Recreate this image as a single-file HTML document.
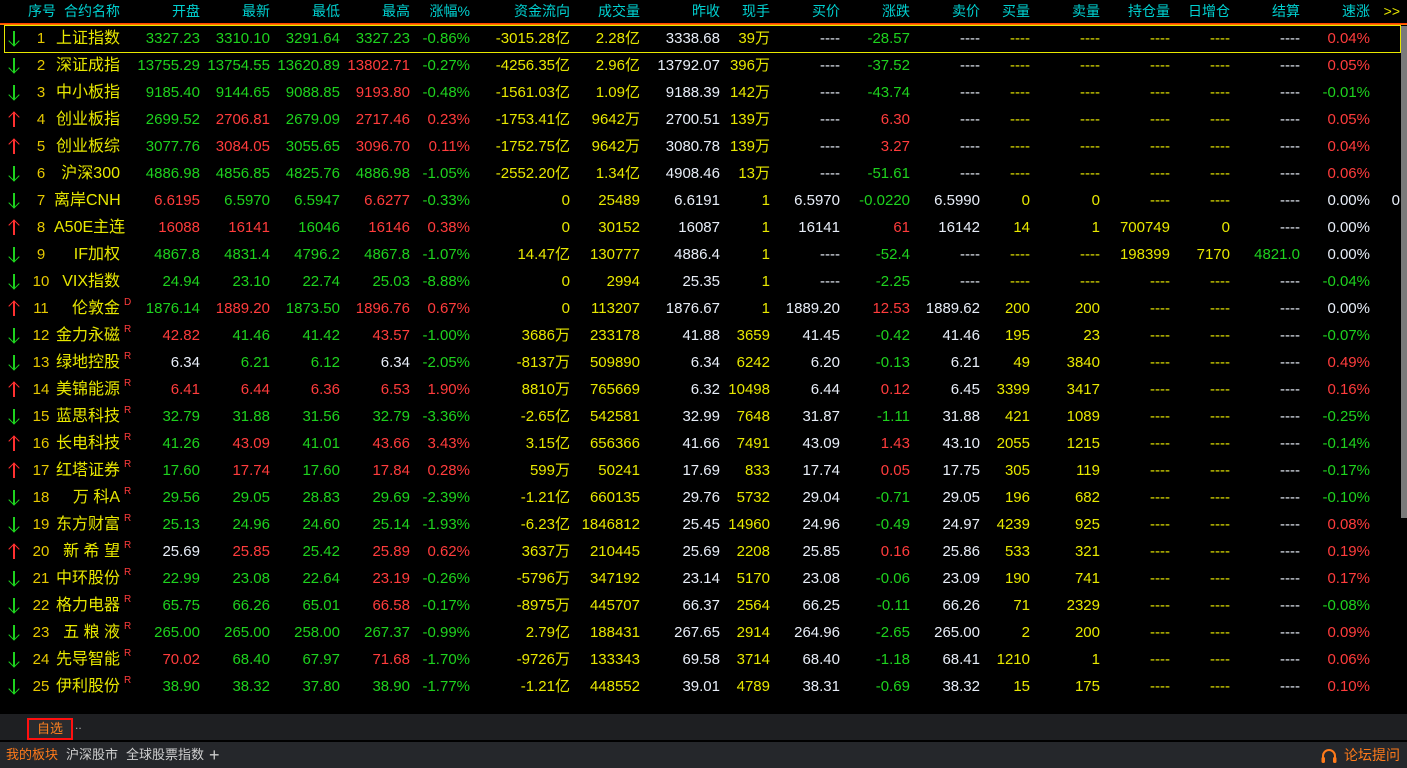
<!DOCTYPE html>
<html><head><meta charset="utf-8"><style>
*{margin:0;padding:0;box-sizing:border-box}
body{width:1407px;height:768px;background:#000;overflow:hidden;position:relative;font-family:"Liberation Sans","Noto Sans CJK SC",sans-serif;font-size:15px}
.r{position:absolute;left:0;height:27px;width:1400px;display:flex;align-items:center;white-space:nowrap;line-height:27px}
.r>span{display:block;text-align:right;flex:none}
.r>span:nth-child(1){width:28px;text-align:center;font-size:16px}
.r>span:nth-child(2){width:26px;text-align:center;color:#e6c800}
.r>span:nth-child(3){width:66px;color:#e8e800;font-size:16px;position:relative;letter-spacing:0}
.r>span:nth-child(4){width:80px}
.r>span:nth-child(5),.r>span:nth-child(6),.r>span:nth-child(7){width:70px}
.r>span:nth-child(8){width:60px}
.r>span:nth-child(9){width:100px;color:#e8e800}
.r>span:nth-child(10){width:70px;color:#e8e800}
.r>span:nth-child(11){width:80px;color:#e8eef8}
.r>span:nth-child(12){width:50px;color:#e8e800}
.r>span:nth-child(13){width:70px;color:#e8eef8}
.r>span:nth-child(14){width:70px}
.r>span:nth-child(15){width:70px;color:#e8eef8}
.r>span:nth-child(16){width:50px;color:#e8e800}
.r>span:nth-child(17){width:70px;color:#e8e800}
.r>span:nth-child(18){width:70px;color:#e8e800}
.r>span:nth-child(19){width:60px;color:#e8e800}
.r>span:nth-child(20){width:70px;color:#e8eef8}
.r>span:nth-child(21){width:70px}
.r>span:nth-child(22){width:30px;color:#e8eef8}
.h>span{color:#00d0d0!important;font-size:14px!important}
.g{color:#1ed21e!important}.d{color:#ff3c3c!important}.w{color:#e8eef8!important}.y{color:#e8e800!important}
.r>span.up,.r>span.dn{position:relative;align-self:stretch;height:27px}
.up::before,.dn::before{content:"";position:absolute;left:13px;top:6px;width:1.5px;height:15px}
.dn::before{background:#1ed21e}.up::before{background:#ff3030}
.up::after,.dn::after{content:"";position:absolute;left:10px;width:7px;height:7px;border-style:solid;border-width:0 0 1.5px 1.5px}
.dn::after{top:12px;border-color:#1ed21e;transform:rotate(-45deg)}
.up::after{top:7px;border-color:#ff3030;transform:rotate(135deg)}
sup{position:absolute;left:100%;margin-left:4px;top:-6px;font-size:10px;color:#ff3c3c}
.line{position:absolute;left:0;top:23px;width:1407px;height:2px;background:linear-gradient(#ff2a00,#ff8c00)}
.box{position:absolute;left:4px;top:25px;width:1397px;height:28px;border:1px solid #e8e800}
.sb{position:absolute;left:1401px;top:26px;width:6px;height:492px;background:#7a7a7a}
.bar1{position:absolute;left:0;top:714px;width:1407px;height:26px;background:#1e1f22}
.bar2{position:absolute;left:0;top:742px;width:1407px;height:26px;background:#25272b}
.tab{position:absolute;left:27px;top:718px;width:46px;height:22px;border:2px solid #ff1010;color:#ff8020;font-size:13px;text-align:center;line-height:18px;background:#2a2b2e}
.dots{position:absolute;left:75px;top:718px;color:#aaa;font-size:12px}
.bt{position:absolute;top:742px;line-height:26px;font-size:13px;color:#d0d0d0}
</style></head><body>
<div class="r h" style="top:-2px"><span></span><span>序号</span><span style="text-align:left;padding-left:10px;width:66px">合约名称</span><span>开盘</span><span>最新</span><span>最低</span><span>最高</span><span>涨幅%</span><span>资金流向</span><span>成交量</span><span>昨收</span><span>现手</span><span>买价</span><span>涨跌</span><span>卖价</span><span>买量</span><span>卖量</span><span>持仓量</span><span>日增仓</span><span>结算</span><span>速涨</span><span style="color:#e8e800!important">&gt;&gt;</span></div>
<div class="line"></div>
<div class="box"></div>
<div class="sb"></div>

<div class="r" style="top:25px"><span class="dn"></span><span>1</span><span>上证指数</span><span class="g">3327.23</span><span class="g">3310.10</span><span class="g">3291.64</span><span class="g">3327.23</span><span class="g">-0.86%</span><span>-3015.28亿</span><span>2.28亿</span><span>3338.68</span><span>39万</span><span>----</span><span class="g">-28.57</span><span>----</span><span>----</span><span>----</span><span>----</span><span>----</span><span>----</span><span class="d">0.04%</span></div>
<div class="r" style="top:52px"><span class="dn"></span><span>2</span><span>深证成指</span><span class="g">13755.29</span><span class="g">13754.55</span><span class="g">13620.89</span><span class="d">13802.71</span><span class="g">-0.27%</span><span>-4256.35亿</span><span>2.96亿</span><span>13792.07</span><span>396万</span><span>----</span><span class="g">-37.52</span><span>----</span><span>----</span><span>----</span><span>----</span><span>----</span><span>----</span><span class="d">0.05%</span></div>
<div class="r" style="top:79px"><span class="dn"></span><span>3</span><span>中小板指</span><span class="g">9185.40</span><span class="g">9144.65</span><span class="g">9088.85</span><span class="d">9193.80</span><span class="g">-0.48%</span><span>-1561.03亿</span><span>1.09亿</span><span>9188.39</span><span>142万</span><span>----</span><span class="g">-43.74</span><span>----</span><span>----</span><span>----</span><span>----</span><span>----</span><span>----</span><span class="g">-0.01%</span></div>
<div class="r" style="top:106px"><span class="up"></span><span>4</span><span>创业板指</span><span class="g">2699.52</span><span class="d">2706.81</span><span class="g">2679.09</span><span class="d">2717.46</span><span class="d">0.23%</span><span>-1753.41亿</span><span>9642万</span><span>2700.51</span><span>139万</span><span>----</span><span class="d">6.30</span><span>----</span><span>----</span><span>----</span><span>----</span><span>----</span><span>----</span><span class="d">0.05%</span></div>
<div class="r" style="top:133px"><span class="up"></span><span>5</span><span>创业板综</span><span class="g">3077.76</span><span class="d">3084.05</span><span class="g">3055.65</span><span class="d">3096.70</span><span class="d">0.11%</span><span>-1752.75亿</span><span>9642万</span><span>3080.78</span><span>139万</span><span>----</span><span class="d">3.27</span><span>----</span><span>----</span><span>----</span><span>----</span><span>----</span><span>----</span><span class="d">0.04%</span></div>
<div class="r" style="top:160px"><span class="dn"></span><span>6</span><span>沪深300</span><span class="g">4886.98</span><span class="g">4856.85</span><span class="g">4825.76</span><span class="g">4886.98</span><span class="g">-1.05%</span><span>-2552.20亿</span><span>1.34亿</span><span>4908.46</span><span>13万</span><span>----</span><span class="g">-51.61</span><span>----</span><span>----</span><span>----</span><span>----</span><span>----</span><span>----</span><span class="d">0.06%</span></div>
<div class="r" style="top:187px"><span class="dn"></span><span>7</span><span>离岸CNH</span><span class="d">6.6195</span><span class="g">6.5970</span><span class="g">6.5947</span><span class="d">6.6277</span><span class="g">-0.33%</span><span>0</span><span>25489</span><span>6.6191</span><span>1</span><span>6.5970</span><span class="g">-0.0220</span><span>6.5990</span><span>0</span><span>0</span><span>----</span><span>----</span><span>----</span><span class="w">0.00%</span><span>0</span></div>
<div class="r" style="top:214px"><span class="up"></span><span>8</span><span>A50E主连</span><span class="d">16088</span><span class="d">16141</span><span class="g">16046</span><span class="d">16146</span><span class="d">0.38%</span><span>0</span><span>30152</span><span>16087</span><span>1</span><span>16141</span><span class="d">61</span><span>16142</span><span>14</span><span>1</span><span>700749</span><span>0</span><span>----</span><span class="w">0.00%</span></div>
<div class="r" style="top:241px"><span class="dn"></span><span>9</span><span>IF加权</span><span class="g">4867.8</span><span class="g">4831.4</span><span class="g">4796.2</span><span class="g">4867.8</span><span class="g">-1.07%</span><span>14.47亿</span><span>130777</span><span>4886.4</span><span>1</span><span>----</span><span class="g">-52.4</span><span>----</span><span>----</span><span>----</span><span>198399</span><span>7170</span><span class="g">4821.0</span><span class="w">0.00%</span></div>
<div class="r" style="top:268px"><span class="dn"></span><span>10</span><span>VIX指数</span><span class="g">24.94</span><span class="g">23.10</span><span class="g">22.74</span><span class="g">25.03</span><span class="g">-8.88%</span><span>0</span><span>2994</span><span>25.35</span><span>1</span><span>----</span><span class="g">-2.25</span><span>----</span><span>----</span><span>----</span><span>----</span><span>----</span><span>----</span><span class="g">-0.04%</span></div>
<div class="r" style="top:295px"><span class="up"></span><span>11</span><span>伦敦金<sup>D</sup></span><span class="g">1876.14</span><span class="d">1889.20</span><span class="g">1873.50</span><span class="d">1896.76</span><span class="d">0.67%</span><span>0</span><span>113207</span><span>1876.67</span><span>1</span><span>1889.20</span><span class="d">12.53</span><span>1889.62</span><span>200</span><span>200</span><span>----</span><span>----</span><span>----</span><span class="w">0.00%</span></div>
<div class="r" style="top:322px"><span class="dn"></span><span>12</span><span>金力永磁<sup>R</sup></span><span class="d">42.82</span><span class="g">41.46</span><span class="g">41.42</span><span class="d">43.57</span><span class="g">-1.00%</span><span>3686万</span><span>233178</span><span>41.88</span><span>3659</span><span>41.45</span><span class="g">-0.42</span><span>41.46</span><span>195</span><span>23</span><span>----</span><span>----</span><span>----</span><span class="g">-0.07%</span></div>
<div class="r" style="top:349px"><span class="dn"></span><span>13</span><span>绿地控股<sup>R</sup></span><span class="w">6.34</span><span class="g">6.21</span><span class="g">6.12</span><span class="w">6.34</span><span class="g">-2.05%</span><span>-8137万</span><span>509890</span><span>6.34</span><span>6242</span><span>6.20</span><span class="g">-0.13</span><span>6.21</span><span>49</span><span>3840</span><span>----</span><span>----</span><span>----</span><span class="d">0.49%</span></div>
<div class="r" style="top:376px"><span class="up"></span><span>14</span><span>美锦能源<sup>R</sup></span><span class="d">6.41</span><span class="d">6.44</span><span class="d">6.36</span><span class="d">6.53</span><span class="d">1.90%</span><span>8810万</span><span>765669</span><span>6.32</span><span>10498</span><span>6.44</span><span class="d">0.12</span><span>6.45</span><span>3399</span><span>3417</span><span>----</span><span>----</span><span>----</span><span class="d">0.16%</span></div>
<div class="r" style="top:403px"><span class="dn"></span><span>15</span><span>蓝思科技<sup>R</sup></span><span class="g">32.79</span><span class="g">31.88</span><span class="g">31.56</span><span class="g">32.79</span><span class="g">-3.36%</span><span>-2.65亿</span><span>542581</span><span>32.99</span><span>7648</span><span>31.87</span><span class="g">-1.11</span><span>31.88</span><span>421</span><span>1089</span><span>----</span><span>----</span><span>----</span><span class="g">-0.25%</span></div>
<div class="r" style="top:430px"><span class="up"></span><span>16</span><span>长电科技<sup>R</sup></span><span class="g">41.26</span><span class="d">43.09</span><span class="g">41.01</span><span class="d">43.66</span><span class="d">3.43%</span><span>3.15亿</span><span>656366</span><span>41.66</span><span>7491</span><span>43.09</span><span class="d">1.43</span><span>43.10</span><span>2055</span><span>1215</span><span>----</span><span>----</span><span>----</span><span class="g">-0.14%</span></div>
<div class="r" style="top:457px"><span class="up"></span><span>17</span><span>红塔证券<sup>R</sup></span><span class="g">17.60</span><span class="d">17.74</span><span class="g">17.60</span><span class="d">17.84</span><span class="d">0.28%</span><span>599万</span><span>50241</span><span>17.69</span><span>833</span><span>17.74</span><span class="d">0.05</span><span>17.75</span><span>305</span><span>119</span><span>----</span><span>----</span><span>----</span><span class="g">-0.17%</span></div>
<div class="r" style="top:484px"><span class="dn"></span><span>18</span><span>万 科A<sup>R</sup></span><span class="g">29.56</span><span class="g">29.05</span><span class="g">28.83</span><span class="g">29.69</span><span class="g">-2.39%</span><span>-1.21亿</span><span>660135</span><span>29.76</span><span>5732</span><span>29.04</span><span class="g">-0.71</span><span>29.05</span><span>196</span><span>682</span><span>----</span><span>----</span><span>----</span><span class="g">-0.10%</span></div>
<div class="r" style="top:511px"><span class="dn"></span><span>19</span><span>东方财富<sup>R</sup></span><span class="g">25.13</span><span class="g">24.96</span><span class="g">24.60</span><span class="g">25.14</span><span class="g">-1.93%</span><span>-6.23亿</span><span>1846812</span><span>25.45</span><span>14960</span><span>24.96</span><span class="g">-0.49</span><span>24.97</span><span>4239</span><span>925</span><span>----</span><span>----</span><span>----</span><span class="d">0.08%</span></div>
<div class="r" style="top:538px"><span class="up"></span><span>20</span><span>新 希 望<sup>R</sup></span><span class="w">25.69</span><span class="d">25.85</span><span class="g">25.42</span><span class="d">25.89</span><span class="d">0.62%</span><span>3637万</span><span>210445</span><span>25.69</span><span>2208</span><span>25.85</span><span class="d">0.16</span><span>25.86</span><span>533</span><span>321</span><span>----</span><span>----</span><span>----</span><span class="d">0.19%</span></div>
<div class="r" style="top:565px"><span class="dn"></span><span>21</span><span>中环股份<sup>R</sup></span><span class="g">22.99</span><span class="g">23.08</span><span class="g">22.64</span><span class="d">23.19</span><span class="g">-0.26%</span><span>-5796万</span><span>347192</span><span>23.14</span><span>5170</span><span>23.08</span><span class="g">-0.06</span><span>23.09</span><span>190</span><span>741</span><span>----</span><span>----</span><span>----</span><span class="d">0.17%</span></div>
<div class="r" style="top:592px"><span class="dn"></span><span>22</span><span>格力电器<sup>R</sup></span><span class="g">65.75</span><span class="g">66.26</span><span class="g">65.01</span><span class="d">66.58</span><span class="g">-0.17%</span><span>-8975万</span><span>445707</span><span>66.37</span><span>2564</span><span>66.25</span><span class="g">-0.11</span><span>66.26</span><span>71</span><span>2329</span><span>----</span><span>----</span><span>----</span><span class="g">-0.08%</span></div>
<div class="r" style="top:619px"><span class="dn"></span><span>23</span><span>五 粮 液<sup>R</sup></span><span class="g">265.00</span><span class="g">265.00</span><span class="g">258.00</span><span class="g">267.37</span><span class="g">-0.99%</span><span>2.79亿</span><span>188431</span><span>267.65</span><span>2914</span><span>264.96</span><span class="g">-2.65</span><span>265.00</span><span>2</span><span>200</span><span>----</span><span>----</span><span>----</span><span class="d">0.09%</span></div>
<div class="r" style="top:646px"><span class="dn"></span><span>24</span><span>先导智能<sup>R</sup></span><span class="d">70.02</span><span class="g">68.40</span><span class="g">67.97</span><span class="d">71.68</span><span class="g">-1.70%</span><span>-9726万</span><span>133343</span><span>69.58</span><span>3714</span><span>68.40</span><span class="g">-1.18</span><span>68.41</span><span>1210</span><span>1</span><span>----</span><span>----</span><span>----</span><span class="d">0.06%</span></div>
<div class="r" style="top:673px"><span class="dn"></span><span>25</span><span>伊利股份<sup>R</sup></span><span class="g">38.90</span><span class="g">38.32</span><span class="g">37.80</span><span class="g">38.90</span><span class="g">-1.77%</span><span>-1.21亿</span><span>448552</span><span>39.01</span><span>4789</span><span>38.31</span><span class="g">-0.69</span><span>38.32</span><span>15</span><span>175</span><span>----</span><span>----</span><span>----</span><span class="d">0.10%</span></div>

<div class="bar1"></div>
<div class="tab">自选</div>
<div class="dots">..</div>
<div class="bar2"></div>
<div class="bt" style="left:6px;color:#ff7a1a">我的板块</div>
<div class="bt" style="left:66px">沪深股市</div>
<div class="bt" style="left:126px">全球股票指数</div>
<div class="bt" style="left:209px;font-size:18px;color:#ccc">+</div>
<svg style="position:absolute;left:1320px;top:747px" width="18" height="17" viewBox="0 0 18 17"><path d="M3 13 V9 a6 6 0 0 1 12 0 V13" fill="none" stroke="#ff7a1a" stroke-width="2"/><rect x="1.5" y="10" width="3.5" height="6" rx="1.5" fill="#ff7a1a"/><rect x="13" y="10" width="3.5" height="6" rx="1.5" fill="#ff7a1a"/></svg>
<div class="bt" style="left:1344px;color:#ff7a1a;font-size:14px">论坛提问</div>
</body></html>
